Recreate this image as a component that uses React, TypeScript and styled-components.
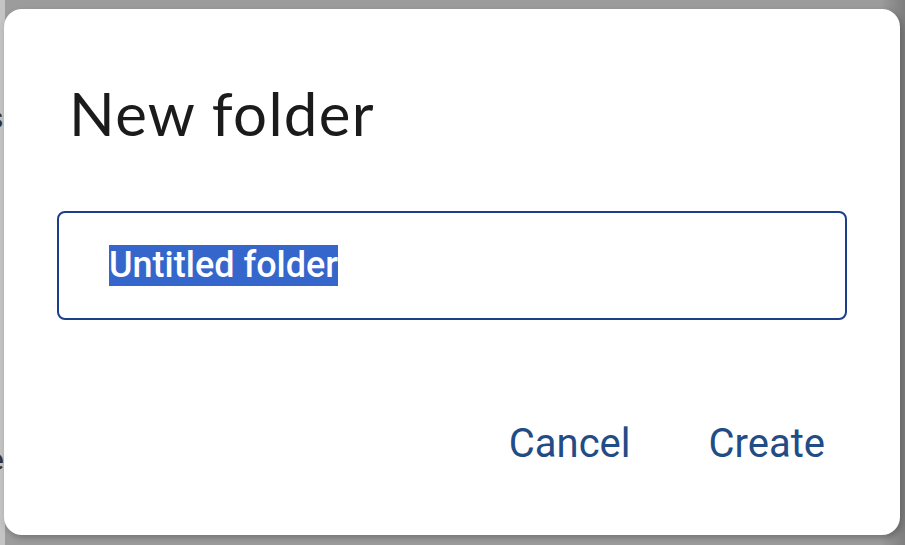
import styled, { createGlobalStyle } from 'styled-components'

const GlobalStyle = createGlobalStyle`
  html, body {
    margin: 0;
    padding: 0;
    background: #9a9a9a;
  }
  #root {
    min-height: 545px;
  }
`

export default function App() {
  return (
    <Page>
      <GlobalStyle />
      <Backdrop>
        <Ghost $top={100}>s</Ghost>
        <Ghost $top={442}>e</Ghost>
      </Backdrop>
      <Dialog>
        <Title>New folder</Title>
        <Field>
          <Selected>Untitled folder</Selected>
        </Field>
        <Actions>
          <TextButton>Cancel</TextButton>
          <TextButton>Create</TextButton>
        </Actions>
      </Dialog>
    </Page>
  )
}

const Page = styled.div`
  position: relative;
  width: 905px;
  height: 545px;
  padding: 9px 5px 10px 4px;
  box-sizing: border-box;
  background: linear-gradient(90deg, #c4c4c4 0, #c4c4c4 5px, #9c9c9c 5px, #9c9c9c 880px, #7e7e7e 905px);
  overflow: hidden;
`

const Backdrop = styled.div`
  position: absolute;
  inset: 0;
`

const Ghost = styled.span<{ $top: number }>`
  position: absolute;
  left: -12px;
  top: ${({ $top }) => $top}px;
  font-family: 'Roboto', sans-serif;
  font-size: 30px;
  color: #333;
`

const Dialog = styled.div`
  position: relative;
  height: 100%;
  box-sizing: border-box;
  background: #ffffff;
  border-radius: 18px;
  padding: 64px 53px 0 53px;
  display: flex;
  flex-direction: column;
  box-shadow: 2px 3px 6px rgba(0, 0, 0, 0.25);
`

const Title = styled.h1`
  margin: 0 0 0 12px;
  font-family: 'Lato', 'Inter', sans-serif;
  font-weight: 400;
  font-size: 60px;
  line-height: 80px;
  color: #1b1b1b;
  letter-spacing: 1.3px;
`

const Field = styled.div`
  margin-top: 58px;
  height: 109px;
  box-sizing: border-box;
  border: 2px solid #1c3f8c;
  border-radius: 8px;
  display: flex;
  align-items: center;
  padding-left: 50px;
`

const Selected = styled.span`
  background: #3566cc;
  color: #ffffff;
  font-family: 'Roboto', sans-serif;
  font-weight: 500;
  font-size: 36px;
  line-height: 41px;
  letter-spacing: 0;
`

const Actions = styled.div`
  display: flex;
  justify-content: flex-end;
  gap: 78px;
  margin-top: 100px;
  padding-right: 22px;
`

const TextButton = styled.button`
  border: none;
  background: none;
  padding: 0;
  font-family: 'Roboto', sans-serif;
  font-weight: 400;
  font-size: 40px;
  line-height: 48px;
  color: #224c86;
  cursor: pointer;
`
